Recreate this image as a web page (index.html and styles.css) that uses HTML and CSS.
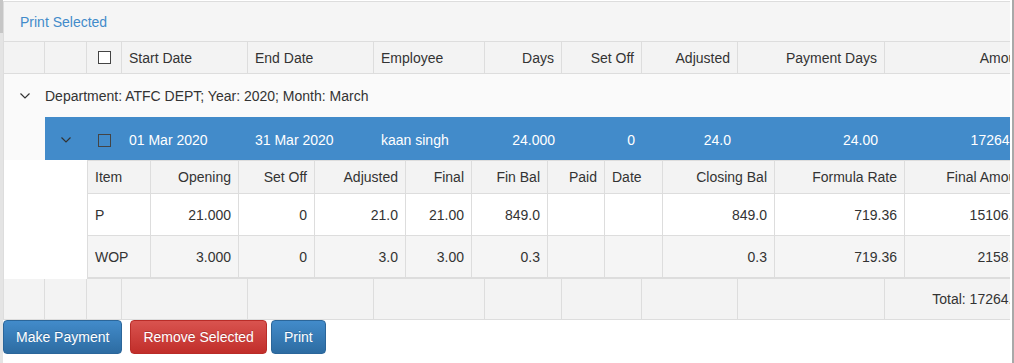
FILE: index.html
```html
<!DOCTYPE html>
<html lang="en">
<head>
  <meta charset="UTF-8">
  <title>Payroll Payments</title>
  <link rel="stylesheet" href="styles.css">
</head>
<body>
  <div class="frame">
    <div class="grid">
      <div class="toolbar">
        <a href="#" class="link">Print Selected</a>
      </div>

      <div class="table">
        <div class="head main-cols">
          <div class="cell"></div>
          <div class="cell"></div>
          <div class="cell center"><span class="check"></span></div>
          <div class="cell">Start Date</div>
          <div class="cell">End Date</div>
          <div class="cell">Employee</div>
          <div class="cell num">Days</div>
          <div class="cell num">Set Off</div>
          <div class="cell num">Adjusted</div>
          <div class="cell num">Payment Days</div>
          <div class="cell num">Amount</div>
        </div>

        <div class="group">
          <span class="group-icon">
            <svg width="10" height="6" viewBox="0 0 10 6"><polyline points="0.5,0.5 5,5 9.5,0.5" /></svg>
          </span>
          <span>Department: ATFC DEPT; Year: 2020; Month: March</span>
        </div>

        <div class="master main-cols">
          <div class="indent"></div>
          <div class="cell center">
            <svg width="10" height="6" viewBox="0 0 10 6"><polyline points="0.5,0.5 5,5 9.5,0.5" /></svg>
          </div>
          <div class="cell center"><span class="check"></span></div>
          <div class="cell">01 Mar 2020</div>
          <div class="cell">31 Mar 2020</div>
          <div class="cell">kaan singh</div>
          <div class="cell num">24.000</div>
          <div class="cell num">0</div>
          <div class="cell num">24.0</div>
          <div class="cell num">24.00</div>
          <div class="cell num">17264.64</div>
        </div>

        <div class="detail-row">
          <div class="detail-indent"></div>
          <div class="detail">
            <div class="dhead detail-cols">
              <div class="cell">Item</div>
              <div class="cell num">Opening</div>
              <div class="cell num">Set Off</div>
              <div class="cell num">Adjusted</div>
              <div class="cell num">Final</div>
              <div class="cell num">Fin Bal</div>
              <div class="cell num">Paid</div>
              <div class="cell">Date</div>
              <div class="cell num">Closing Bal</div>
              <div class="cell num">Formula Rate</div>
              <div class="cell num">Final Amount</div>
            </div>
            <div class="drow detail-cols">
              <div class="cell">P</div>
              <div class="cell num">21.000</div>
              <div class="cell num">0</div>
              <div class="cell num">21.0</div>
              <div class="cell num">21.00</div>
              <div class="cell num">849.0</div>
              <div class="cell num"></div>
              <div class="cell"></div>
              <div class="cell num">849.0</div>
              <div class="cell num">719.36</div>
              <div class="cell num">15106.56</div>
            </div>
            <div class="drow alt detail-cols">
              <div class="cell">WOP</div>
              <div class="cell num">3.000</div>
              <div class="cell num">0</div>
              <div class="cell num">3.0</div>
              <div class="cell num">3.00</div>
              <div class="cell num">0.3</div>
              <div class="cell num"></div>
              <div class="cell"></div>
              <div class="cell num">0.3</div>
              <div class="cell num">719.36</div>
              <div class="cell num">2158.08</div>
            </div>
          </div>
        </div>

        <div class="foot main-cols">
          <div class="cell"></div>
          <div class="cell"></div>
          <div class="cell"></div>
          <div class="cell"></div>
          <div class="cell"></div>
          <div class="cell"></div>
          <div class="cell"></div>
          <div class="cell"></div>
          <div class="cell"></div>
          <div class="cell"></div>
          <div class="cell num">Total: 17264.64</div>
        </div>
      </div>
    </div>

    <div class="actions">
      <button class="btn btn-primary pay">Make Payment</button>
      <button class="btn btn-danger remove">Remove Selected</button>
      <button class="btn btn-primary">Print</button>
    </div>
  </div>
</body>
</html>
```

FILE: styles.css
```css
* {
  box-sizing: border-box;
}

body {
  margin: 0;
  font-family: "Liberation Sans", Arial, sans-serif;
  font-size: 14px;
  color: #333;
  background: #fff;
}

.frame {
  width: 1014px;
  height: 363px;
  padding: 1px 0 0 3px;
  border-right: 2px solid #a9a9a9;
  overflow: hidden;
  background:
    linear-gradient(#c6c6c6, #c6c6c6) 0 0 / 3px 33px no-repeat,
    linear-gradient(#e4e4e4, #e4e4e4) 0 0 / 3px 100% no-repeat;
}

.grid {
  width: 1007px;
  border-top: 1px solid #ddd;
  border-left: 1px solid #ddd;
  overflow: hidden;
}

.toolbar {
  height: 40px;
  padding-left: 16px;
  display: flex;
  align-items: center;
  background: #f5f5f5;
  border-bottom: 1px solid #ddd;
}

.link {
  color: #428bca;
  text-decoration: none;
}

.table {
  width: 1032px;
}

.main-cols {
  display: grid;
  grid-template-columns: 41px 42px 35px 126px 126px 111px 77px 80px 96px 147px 151px;
}

.detail-cols {
  display: grid;
  grid-template-columns: 63px 88px 76px 91px 66px 76px 57px 58px 112px 130px 131px;
}

.cell {
  display: flex;
  align-items: center;
  padding: 0 7px;
  white-space: nowrap;
  overflow: hidden;
}

.num {
  justify-content: flex-end;
}

.center {
  justify-content: center;
  padding: 0;
}

.check {
  width: 13px;
  height: 13px;
  border: 1px solid #444;
  background: #fff;
}

svg polyline {
  fill: none;
  stroke: #333;
  stroke-width: 1.2;
}

.head {
  height: 32px;
  background: #f3f3f3;
  border-bottom: 1px solid #ddd;
}

.head .cell,
.foot .cell,
.detail .cell {
  border-right: 1px solid #ddd;
}

.group {
  height: 43px;
  display: flex;
  align-items: center;
  background: #fafafa;
}

.group-icon {
  width: 41px;
  display: flex;
  justify-content: center;
}

.master {
  height: 43px;
}

.master .indent {
  background: #fafafa;
}

.master .cell {
  padding-top: 3px;
  background: #428bca;
  color: #fff;
}

.master .center {
  padding: 3px 0 0;
}

.master .check {
  background: transparent;
}

.detail-row {
  display: flex;
}

.detail-indent {
  width: 83px;
  flex: none;
  background: #fff;
}

.detail {
  border-top: 1px solid #ddd;
  border-left: 1px solid #ddd;
  border-bottom: 1px solid #ddd;
}

.dhead {
  height: 33px;
  background: #f3f3f3;
  border-bottom: 1px solid #ddd;
}

.drow {
  height: 42px;
  background: #fff;
  border-bottom: 1px solid #ddd;
}

.drow.alt {
  background: #f5f5f5;
}

.foot {
  height: 41px;
  background: #f3f3f3;
  border-bottom: 1px solid #ddd;
}

.actions {
  display: flex;
}

.btn {
  height: 34px;
  padding: 0 12px;
  font-family: inherit;
  font-size: 14px;
  color: #fff;
  border: 1px solid;
  border-radius: 4px;
  text-shadow: 0 -1px 0 rgba(0, 0, 0, 0.2);
  cursor: pointer;
}

.btn-primary {
  background: linear-gradient(#428bca, #2d6ca2);
  border-color: #2b669a;
}

.btn-danger {
  background: linear-gradient(#d9534f, #c12e2a);
  border-color: #b92c28;
}

.pay {
  margin-right: 8px;
}

.remove {
  margin-right: 4px;
}
```
